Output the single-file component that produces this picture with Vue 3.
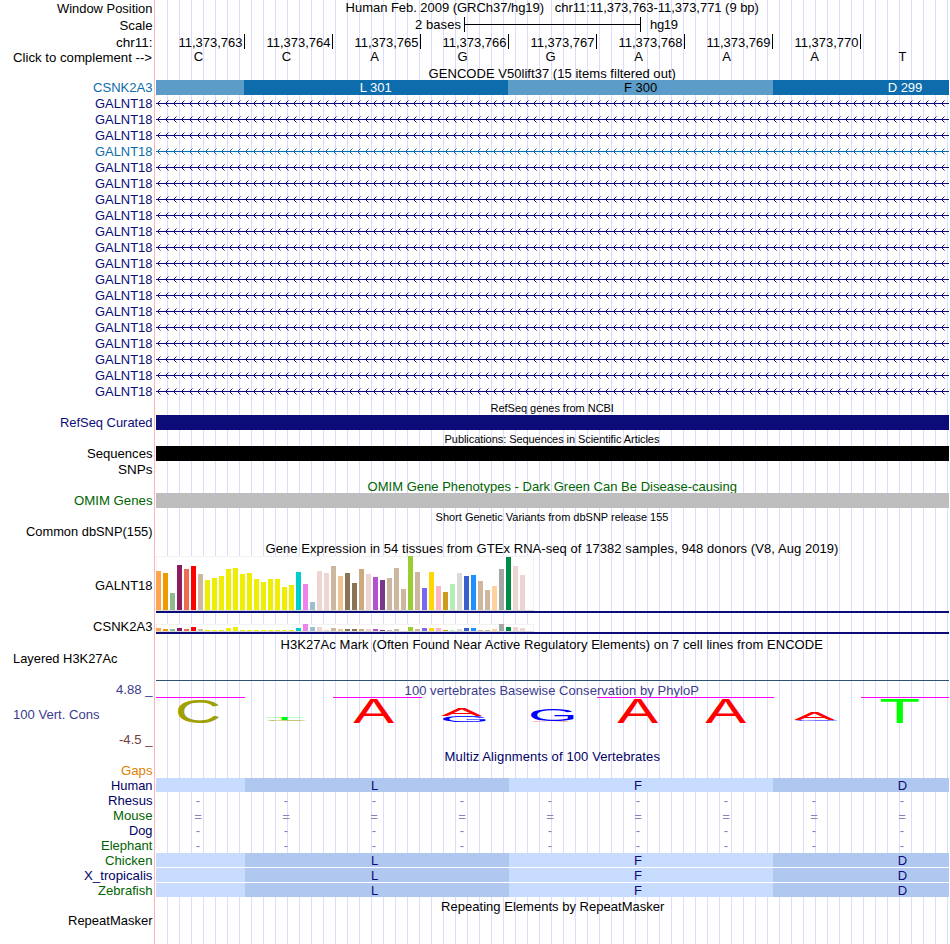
<template>
    <main class="browser">
        <section v-for="(row, r) in rows" :key="r" class="row" :style="{ height: row.h + 'px' }">
            <svg class="label" width="154" :height="row.h">
                <text
                    v-for="(l, i) in row.labels || []"
                    :key="i"
                    :x="l.x"
                    :y="l.y"
                    :textLength="l.w"
                    lengthAdjust="spacingAndGlyphs"
                    :fill="l.color"
                >{{ l.text }}</text>
            </svg>
            <svg class="track" width="793" :height="row.h" :viewBox="`156 0 793 ${row.h}`">
                <text
                    v-if="row.title"
                    :x="row.title.x"
                    :y="row.title.y"
                    :textLength="row.title.w"
                    :fill="row.title.color"
                    :class="{ small: row.title.small }"
                >{{ row.title.text }}</text>

                <g v-if="row.kind === 'scale'">
                    <text x="415" y="11" textLength="46">2 bases</text>
                    <rect x="464" y="-1" width="1" height="15" />
                    <rect x="464" y="6" width="177" height="1" />
                    <rect x="640" y="-1" width="1" height="15" />
                    <text x="650" y="11" textLength="28">hg19</text>
                </g>

                <g v-if="row.kind === 'ruler'">
                    <template v-for="n in 8" :key="n">
                        <text
                            :x="90.5 + n * 88"
                            y="13"
                            textLength="64"
                            lengthAdjust="spacingAndGlyphs"
                        >11,373,{{ 762 + n }}</text>
                        <rect :x="156 + n * 88" y="0" width="1" height="15" />
                    </template>
                </g>

                <g v-if="row.kind === 'bases'" class="middle">
                    <text v-for="(b, i) in 'CCAGGAAAT'" :key="i" :x="baseX(i)" y="11">{{ b }}</text>
                </g>

                <g v-if="row.kind === 'codons'" class="middle">
                    <rect
                        v-for="(c, i) in codons"
                        :key="i"
                        :x="c.x"
                        y="0"
                        :width="c.w"
                        height="15"
                        :fill="i % 2 ? '#0c6cac' : '#5c9cc8'"
                    />
                    <text x="375.7" y="12" fill="#fff">L 301</text>
                    <text x="640.5" y="12">F 300</text>
                    <text x="905" y="12" fill="#fff">D 299</text>
                </g>

                <g v-if="row.kind === 'intron'" :stroke="row.color" fill="none">
                    <path d="M156 7.5H949" />
                    <path :d="chevrons" />
                    <path :d="chevronTips" stroke-opacity=".5" />
                </g>

                <rect v-if="row.kind === 'bar'" x="156" y="0" width="793" height="15" :fill="row.color" />

                <g v-if="row.kind === 'gtex'">
                    <rect x="156.5" y=".5" width="377" :height="row.base" fill="#fff" stroke="#f2f2f2" />
                    <rect x="156" :y="row.base" width="378" height="1" fill="#d8d8d8" />
                    <rect
                        v-for="(v, i) in row.values"
                        :key="i"
                        :x="156 + i * 7"
                        :y="row.base - v"
                        width="5"
                        :height="v"
                        :fill="tissueColors[i]"
                    />
                    <rect x="156" :y="row.base + 1" width="793" height="2" fill="#0c0c78" />
                </g>

                <rect v-if="row.kind === 'signal'" x="156" y="26" width="793" height="1" fill="#2c5470" />

                <g v-if="row.kind === 'phylop'">
                    <rect
                        v-for="c in clipped"
                        :key="c.x"
                        :x="c.x"
                        y="15"
                        :width="c.w"
                        height="1"
                        fill="#f0f"
                    />
                    <text
                        v-for="(l, i) in logo"
                        :key="'l' + i"
                        class="logo"
                        :fill="logoColors[l.c]"
                        :transform="logoTransform(l)"
                    >{{ l.c }}</text>
                </g>

                <g v-if="row.kind === 'aligned'" class="middle" fill="#0c0c78">
                    <rect
                        v-for="(b, i) in blocks"
                        :key="i"
                        :x="b.x"
                        y="0"
                        :width="b.w"
                        height="14"
                        :fill="i % 2 ? '#b0c8f0' : '#c8dcff'"
                    />
                    <rect v-if="row.split" x="156" y="14" width="793" height="1" fill="#fff" />
                    <text x="374.5" y="12">L</text>
                    <text x="638" y="12">F</text>
                    <text x="902.5" y="12">D</text>
                </g>

                <g v-if="row.kind === 'unaligned'" class="middle" fill="#8484b8">
                    <text
                        v-for="n in 9"
                        :key="n"
                        :x="baseX(n - 1) - 0.5"
                        :y="row.mark === '=' ? 13 : 12"
                    >{{ row.mark }}</text>
                </g>
            </svg>
        </section>
    </main>
</template>

<script setup>
const navy = '#0c0c78'
const blue = '#0c6cac'
const green = '#006400'

// right aligned label, x is the left edge of the text
function label(text, x, color = '#000', y = 12, end = 152.5) {
    return [{ text, x, y, w: end - x, color }]
}

function title(text, x, end, y, color = '#000', small = false) {
    return { text, x: x - 0.4, y, w: end - x + 0.8, color, small }
}

const transcripts = Array.from({ length: 19 }, (_, i) => ({
    h: 16,
    kind: 'intron',
    color: i === 3 ? blue : navy,
    labels: label('GALNT18', 95, i === 3 ? blue : navy)
}))

const galnt = [
    39, 37, 17, 45, 41, 44, 36, 30, 32, 34, 41, 42, 36, 37, 31, 28, 31, 31, 23, 25, 38, 26, 8, 39, 37, 44, 34, 37,
    27, 41, 36, 33, 30, 32, 42, 21, 54, 38, 22, 38, 24, 18, 26, 37, 34, 35, 29, 20, 24, 41, 53, 44, 35
]

const csnk = [
    3, 2, 2, 3, 2, 4, 2, 1, 1, 1, 3, 4, 1, 1, 1, 1, 1, 1, 1, 1, 3, 7, 4, 4, 1, 3, 2, 2,
    2, 2, 2, 2, 1, 1, 2, 0, 4, 2, 3, 3, 3, 1, 1, 2, 3, 3, 1, 1, 2, 7, 4, 4, 3
]

const tissueColors = [
    '#ffa54f', '#ee9a00', '#8fbc8f', '#8b1c62', '#ee6a50', '#ff0000', '#cdb79e',
    ...Array(13).fill('#eeee00'),
    '#00cdcd', '#ee82ee', '#9ac0cd', '#eed5d2', '#eed5d2', '#cdb79e', '#eec591', '#8b7355', '#8b7355',
    '#cdaa7d', '#eed5d2', '#b452cd', '#7a378b', '#cdb79e', '#cdb79e', '#cdb79e', '#9acd32', '#cdb79e',
    '#7a67ee', '#ffd700', '#ffb6c1', '#cd9b1d', '#b4eeb4', '#d9d9d9', '#3a5fcd', '#1e90ff', '#cdb79e',
    '#cdb79e', '#ffd39b', '#a6a6a6', '#008b45', '#eed5d2', '#eed5d2'
]

const rows = [
    {
        h: 18,
        labels: label('Window Position', 57, '#000', 13),
        title: title('Human Feb. 2009 (GRCh37/hg19)\u00a0\u00a0 chr11:11,373,763-11,373,771 (9 bp)', 346, 758.5, 12)
    },
    { h: 16, kind: 'scale', labels: label('Scale', 119.5) },
    { h: 16, kind: 'ruler', labels: label('chr11:', 116, '#000', 13) },
    { h: 14, kind: 'bases', labels: label('Click to complement -->', 13, '#000', 12, 152) },
    { h: 16, title: title('GENCODE V50lift37 (15 items filtered out)', 429, 675.5, 14) },
    { h: 16, kind: 'codons', labels: label('CSNK2A3', 93, blue) },
    ...transcripts,
    { h: 15, title: title('RefSeq genes from NCBI', 491, 613.5, 12, '#000', true) },
    { h: 16, kind: 'bar', color: navy, labels: label('RefSeq Curated', 60, navy) },
    { h: 15, title: title('Publications: Sequences in Scientific Articles', 445, 659, 12, '#000', true) },
    { h: 16, kind: 'bar', color: '#000', labels: label('Sequences', 87) },
    { h: 16, labels: label('SNPs', 118) },
    { h: 15, title: title('OMIM Gene Phenotypes - Dark Green Can Be Disease-causing', 368, 736.5, 13, green) },
    { h: 16, kind: 'bar', color: '#bebebe', labels: label('OMIM Genes', 74, green) },
    { h: 15, title: title('Short Genetic Variants from dbSNP release 155', 436, 668, 12, '#000', true) },
    { h: 16, labels: label('Common dbSNP(155)', 26) },
    { h: 16, title: title('Gene Expression in 54 tissues from GTEx RNA-seq of 17382 samples, 948 donors (V8, Aug 2019)', 266, 838, 13) },
    { h: 68, kind: 'gtex', base: 54, values: galnt, labels: label('GALNT18', 95, '#000', 34) },
    { h: 13, kind: 'gtex', base: 7, values: csnk, labels: label('CSNK2A3', 93, '#000', 7) },
    { h: 17, title: title('H3K27Ac Mark (Often Found Near Active Regulatory Elements) on 7 cell lines from ENCODE', 281, 822.5, 12) },
    { h: 28, kind: 'signal', labels: label('Layered H3K27Ac', 13, '#000', 9, 117.5) },
    {
        h: 66,
        kind: 'phylop',
        title: title('100 vertebrates Basewise Conservation by PhyloP', 405, 698.5, 13, '#3c3c8c'),
        labels: [
            ...label('4.88 _', 116, '#3c3c8c', 12),
            ...label('100 Vert. Cons', 13, '#3c3c8c', 37, 99.5),
            ...label('-4.5 _', 119, '#783c3c', 62)
        ]
    },
    { h: 18, title: title('Multiz Alignments of 100 Vertebrates', 445, 659.5, 13, '#000064') },
    { h: 12, labels: label('Gaps', 121, '#e08000', 9) },
    { h: 15, kind: 'aligned', labels: label('Human', 111, '#000064') },
    { h: 15, kind: 'unaligned', mark: '-', labels: label('Rhesus', 108, '#000064') },
    { h: 15, kind: 'unaligned', mark: '=', labels: label('Mouse', 113, green) },
    { h: 15, kind: 'unaligned', mark: '-', labels: label('Dog', 129, '#000064') },
    { h: 15, kind: 'unaligned', mark: '-', labels: label('Elephant', 101, green) },
    { h: 15, kind: 'aligned', split: true, labels: label('Chicken', 105, green) },
    { h: 15, kind: 'aligned', split: true, labels: label('X_tropicalis', 84, '#000064') },
    { h: 15, kind: 'aligned', labels: label('Zebrafish', 98, green) },
    { h: 15, title: title('Repeating Elements by RepeatMasker', 441.5, 664, 13) },
    { h: 31, labels: label('RepeatMasker', 68) }
]

const codons = [
    { x: 156, w: 88 },
    { x: 244, w: 264 },
    { x: 508, w: 265 },
    { x: 773, w: 176 }
]

const blocks = [
    { x: 156, w: 89 },
    { x: 245, w: 264 },
    { x: 509, w: 264 },
    { x: 773, w: 176 }
]

const clipped = [
    { x: 156, w: 89 },
    { x: 333, w: 89 },
    { x: 597, w: 177 },
    { x: 861, w: 88 }
]

// sequence logo, y measured from the top of the track
const logo = [
    { c: 'C', x: 178, y: 17, w: 41, h: 24 },
    { c: 'T', x: 266, y: 36, w: 37, h: 2 },
    { c: 'C', x: 267, y: 38, w: 40, h: 1 },
    { c: 'A', x: 353.3, y: 17, w: 40.7, h: 24 },
    { c: 'A', x: 441.3, y: 27, w: 40.7, h: 7 },
    { c: 'G', x: 443, y: 34, w: 43, h: 6 },
    { c: 'G', x: 531, y: 27, w: 43, h: 12 },
    { c: 'A', x: 530, y: 39, w: 41, h: 1 },
    { c: 'A', x: 617.3, y: 17, w: 40.7, h: 24 },
    { c: 'A', x: 705.3, y: 17, w: 40.7, h: 24 },
    { c: 'A', x: 794, y: 31, w: 40.7, h: 7 },
    { c: 'G', x: 795, y: 38, w: 43, h: 1.5 },
    { c: 'T', x: 881, y: 17, w: 37.7, h: 24 }
]

const logoColors = { A: '#ff0000', C: '#a0a000', G: '#0000ff', T: '#00ff00' }

// glyph boxes at font-size 100: left, width, bottom, height
const glyphs = {
    A: [0.2, 66.3, 0, 68.8],
    C: [5, 63.4, 1, 70.8],
    G: [5, 66.4, 1, 70.8],
    T: [2.2, 56.7, 0, 68.8]
}

function logoTransform(l) {
    const [left, width, bottom, height] = glyphs[l.c]
    const sx = l.w / width
    const sy = l.h / height
    return `translate(${l.x - left * sx} ${l.y + l.h - bottom * sy}) scale(${sx} ${sy})`
}

function baseX(i) {
    return 198.5 + i * 88
}

let chevrons = ''
let chevronTips = ''
for (let x = 157; x < 947; x += 8) {
    chevrons += `M${x + 1} 6.5h1m-1 2h1M${x + 2} 5.5h1m-1 4h1`
    chevronTips += `M${x + 3} 4.5h1m-1 6h1`
}
</script>

<style scoped>
.browser {
    display: flex;
    flex-direction: column;
    width: 950px;
    height: 944px;
    overflow: hidden;
    background:
        linear-gradient(#ffb4b4, #ffb4b4) 154px 0 / 1px 100% no-repeat,
        repeating-linear-gradient(90deg, transparent 0 11px, #dcdcff 11px 12px) 156px 0 / 793px 100% no-repeat,
        #fff;
}

.row {
    display: flex;
    flex: none;
    gap: 2px;
}

svg {
    display: block;
    flex: none;
    overflow: visible;
    font-family: 'Liberation Sans', Arial, sans-serif;
    font-size: 13px;
}

rect,
path {
    shape-rendering: crispEdges;
}

.small {
    font-size: 11px;
}

.middle {
    text-anchor: middle;
}

.logo {
    font-size: 100px;
}
</style>

<style>
body {
    margin: 0;
    background: #fff;
}
</style>
